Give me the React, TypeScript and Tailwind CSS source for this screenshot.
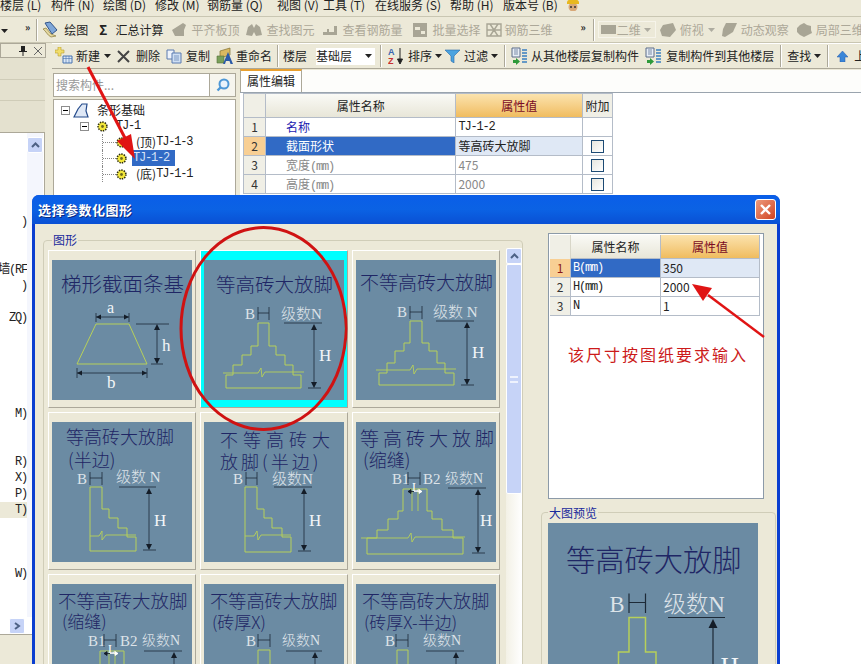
import type { ReactNode } from "react"

const cjk = "font-['Noto_Sans_CJK_SC','Noto_Sans',sans-serif]"
const mono = "font-['Liberation_Mono','Noto_Sans_CJK_SC',monospace] text-[12px] tracking-[-1.2px]"

type Shape = {
  titles: { text: string; x: number; y: number; size: number; spacing?: number }[]
  labels: { text: string; x: number; y: number; size?: number }[]
  ticks?: number[]
  tickY?: number
  lineY: number
  lineX: [number, number]
  arrowX: number
  arrowEnd: number
  hX: number
  hY: number
  outline: string
  extra?: string
  joint?: boolean
}

const F = "#b7d05a"

const shapes: Record<string, Shape> = {
  equal: {
    titles: [{ text: "等高砖大放脚", x: 12, y: 32, size: 19.5 }],
    labels: [{ text: "B", x: 41, y: 59 }, { text: "级数N", x: 77, y: 59, size: 15 }],
    ticks: [54, 65],
    tickY: 47,
    lineY: 63,
    lineX: [80, 118],
    arrowX: 110,
    arrowEnd: 128,
    hX: 115,
    hY: 101,
    outline: "M54 63H65V86H72V95H81V105H89V115H97V128H22V115H29V105H38V95H47V86H54Z",
    extra: "M19 113H54L57 108L58 117L61 112H100",
  },
  unequal: {
    titles: [{ text: "不等高砖大放脚", x: 4, y: 30, size: 19 }],
    labels: [{ text: "B", x: 41, y: 57 }, { text: "级数 N", x: 77, y: 57, size: 15 }],
    ticks: [54, 66],
    tickY: 46,
    lineY: 61,
    lineX: [80, 118],
    arrowX: 111,
    arrowEnd: 125,
    hX: 116,
    hY: 98,
    outline: "M54 61H66V83H73V91H81V103H89V113H98V125H23V113H31V103H39V91H48V83H54Z",
    extra: "M20 110H54L57 105L58 114L61 109H100",
  },
  half: {
    titles: [
      { text: "等高砖大放脚", x: 14, y: 22, size: 18 },
      { text: "(半边)", x: 16, y: 45, size: 18 },
    ],
    labels: [{ text: "B", x: 25, y: 62 }, { text: "级数 N", x: 64, y: 60, size: 15 }],
    ticks: [38, 50],
    tickY: 50,
    lineY: 65,
    lineX: [67, 104],
    arrowX: 97,
    arrowEnd: 128,
    hX: 102,
    hY: 104,
    outline: "M38 65H50V87H57V96H66V106H75V115H84V129H38Z",
    extra: "M38 114H47L50 109L50 118L54 113H84",
  },
  unequalHalf: {
    titles: [
      { text: "不等高砖大", x: 16, y: 25, size: 18, spacing: 5 },
      { text: "放脚(半边)", x: 16, y: 47, size: 18, spacing: 3 },
    ],
    labels: [{ text: "B", x: 29, y: 62 }, { text: "级数N", x: 68, y: 62, size: 15 }],
    ticks: [42, 53],
    tickY: 50,
    lineY: 65,
    lineX: [70, 108],
    arrowX: 100,
    arrowEnd: 129,
    hX: 105,
    hY: 104,
    outline: "M41 65H53V87H60V96H68V106H78V115H87V130H41Z",
    extra: "M41 114H50L53 109L54 118L57 113H87",
  },
  joint: {
    titles: [
      { text: "等高砖大放脚", x: 4, y: 24, size: 19, spacing: 4 },
      { text: "(缩缝)", x: 7, y: 45, size: 18 },
    ],
    labels: [
      { text: "B1", x: 36, y: 62 },
      { text: "B2", x: 67, y: 62 },
      { text: "级数N", x: 89, y: 61, size: 14 },
    ],
    ticks: [52, 64],
    tickY: 50,
    lineY: 66,
    lineX: [92, 130],
    arrowX: 122,
    arrowEnd: 131,
    hX: 124,
    hY: 104,
    outline: "M47 67H71V89H76V97H86V108H97V116H107V132H11V116H21V108H32V97H42V89H47Z",
    extra: "M5 116H52L55 111L56 120L59 115H109M56 67V89M62 67V89",
    joint: true,
  },
  unequalJoint: {
    titles: [
      { text: "不等高砖大放脚", x: 6, y: 24, size: 18.5 },
      { text: "(缩缝)", x: 10, y: 44, size: 17 },
    ],
    labels: [
      { text: "B1", x: 36, y: 62 },
      { text: "B2", x: 68, y: 62 },
      { text: "级数N", x: 90, y: 61, size: 14 },
    ],
    ticks: [52, 64],
    tickY: 50,
    lineY: 67,
    lineX: [92, 130],
    arrowX: 122,
    arrowEnd: 131,
    hX: 124,
    hY: 104,
    outline: "M48 67H72V89H77V97H87V108H97V116H107V132H11V116H21V108H32V97H42V89H48Z",
    extra: "M57 67V89M63 67V89",
    joint: true,
  },
  thick: {
    titles: [
      { text: "不等高砖大放脚", x: 6, y: 24, size: 18.2 },
      { text: "(砖厚X)", x: 8, y: 45, size: 17 },
    ],
    labels: [{ text: "B", x: 42, y: 62 }, { text: "级数N", x: 78, y: 61, size: 14 }],
    ticks: [54, 66],
    tickY: 50,
    lineY: 67,
    lineX: [82, 118],
    arrowX: 111,
    arrowEnd: 131,
    hX: 116,
    hY: 104,
    outline: "M54 66H66V88H73V96H81V108H89V116H98V130H23V116H31V108H39V96H48V88H54Z",
  },
  thickHalf: {
    titles: [
      { text: "不等高砖大放脚", x: 6, y: 24, size: 18.2 },
      { text: "(砖厚X-半边)", x: 8, y: 45, size: 17 },
    ],
    labels: [{ text: "B", x: 29, y: 62 }, { text: "级数N", x: 67, y: 61, size: 14 }],
    ticks: [40, 52],
    tickY: 50,
    lineY: 67,
    lineX: [70, 108],
    arrowX: 100,
    arrowEnd: 131,
    hX: 105,
    hY: 104,
    outline: "M41 66H52V88H59V96H67V108H77V116H86V130H41Z",
  },
}

function Thumb({ shape, size = 140 }: { shape: Shape; size?: number }) {
  const [t1, t2] = shape.ticks ?? [0, 0]
  const tickY = shape.tickY ?? 50
  return (
    <svg width={size} height={size} viewBox="0 0 140 140" className="block bg-[#6b8ba3] shrink-0">
      {shape.titles.map((t) => (
        <text
          key={t.text}
          x={t.x}
          y={t.y}
          fontSize={t.size}
          letterSpacing={t.spacing ?? 0}
          fill="#1f2665"
          fontFamily="'Noto Sans CJK SC', sans-serif"
          fontWeight={300}
        >
          {t.text}
        </text>
      ))}
      {shape.labels.map((l) => (
        <text
          key={l.text}
          x={l.x}
          y={l.y}
          fontSize={l.size ?? 15}
          fill="#f2f5f7"
          fillOpacity={0.85}
          fontFamily="'Liberation Serif', 'Noto Sans CJK SC', serif"
          fontWeight={300}
        >
          {l.text}
        </text>
      ))}
      <text x={shape.hX} y={shape.hY} fontSize="17" fill="#f2f5f7" fontFamily="'Liberation Serif', serif">
        H
      </text>
      <path d={`M${t1} ${tickY}V${tickY + 13}M${t2} ${tickY}V${tickY + 13}M${t1} ${tickY + 6}H${t2}`} stroke="#1d2a38" fill="none" strokeWidth="0.8" />
      <path d={`M${shape.lineX[0]} ${shape.lineY}H${shape.lineX[1]}`} stroke="#1d2a38" strokeWidth="0.8" />
      <path d={`M${shape.arrowX} ${shape.lineY + 3}V${shape.arrowEnd - 2}M${shape.arrowX - 6} ${shape.arrowEnd}H${shape.arrowX + 7}`} stroke="#1d2a38" strokeWidth="0.8" />
      <path
        d={`M${shape.arrowX} ${shape.lineY + 1}l-3 6h6ZM${shape.arrowX} ${shape.arrowEnd}l-3 -6h6Z`}
        fill="#141d28"
      />
      <path d={shape.outline} fill="none" stroke={F} strokeWidth="1" />
      {shape.extra && <path d={shape.extra} fill="none" stroke={F} strokeWidth="0.9" />}
      {shape.joint && (
        <>
          <path d="M52 69.5H58M52 69.5l3 -2v4Z" stroke="#141d28" fill="#141d28" strokeWidth="0.8" />
          <path d="M58 69.5H66M66 69.5l-3 -2v4Z" stroke="#fff" fill="#fff" strokeWidth="0.8" />
          <text x="56" y="69" fontSize="12" fill="#fff" fontFamily="'Liberation Serif', serif">L</text>
        </>
      )}
    </svg>
  )
}

function TrapezoidThumb() {
  return (
    <svg width={140} height={140} viewBox="0 0 140 140" className="block bg-[#6b8ba3] shrink-0">
      <text x="9" y="32" fontSize="20.5" fill="#1f2665" fontFamily="'Noto Sans CJK SC', sans-serif" fontWeight={300}>
        梯形截面条基
      </text>
      <text x="55" y="53" fontSize="16" fill="#f2f5f7" fontFamily="'Liberation Serif', serif">a</text>
      <text x="110" y="91" fontSize="17" fill="#f2f5f7" fontFamily="'Liberation Serif', serif">h</text>
      <text x="55" y="128" fontSize="17" fill="#f2f5f7" fontFamily="'Liberation Serif', serif">b</text>
      <path d="M44 64H77L95 104H25Z" fill="none" stroke={F} strokeWidth="1" />
      <path d="M44 53V62M77 53V62M44 57H77M84 64H117M105 66V102M99 104H111M25 108V118M95 108V118M25 113H95" stroke="#1d2a38" strokeWidth="0.8" fill="none" />
      <path d="M44 57l5 -2.5v5ZM77 57l-5 -2.5v5ZM105 64l-3 6h6ZM105 104l-3 -6h6ZM25 113l5 -2.5v5ZM95 113l-5 -2.5v5Z" fill="#141d28" />
    </svg>
  )
}

function Card({ children, selected }: { children: ReactNode; selected?: boolean }) {
  return (
    <div
      className={`w-[148px] h-[158px] flex justify-center pt-[9px] border-t border-l border-white border-r border-b border-r-[#aca899] border-b-[#aca899] ${
        selected ? "bg-[#00ffff]" : "bg-[#ece9d8]"
      }`}
    >
      {children}
    </div>
  )
}

function Caret({ className = "" }: { className?: string }) {
  return (
    <svg width="7" height="4" viewBox="0 0 7 4" className={`shrink-0 ${className}`}>
      <path d="M0 0H7L3.5 4Z" fill="#222" />
    </svg>
  )
}

function Sep({ className = "" }: { className?: string }) {
  return <div className={`w-[2px] h-[22px] shrink-0 border-l border-[#aca899] border-r-white border-r ${className}`} />
}

function Blob({ kind }: { kind: number }) {
  const d = [
    "M1 8L12 1L15 3L13 8V14H4Z",
    "M2 5L6 2L8 6L10 2L14 5L16 13L10 14L8 10L6 14L0 13Z",
    "M1 10H5V7H7V10H12V4H15V13H1Z",
    "M1 1H15V15H1ZM3 5H8V8H3ZM9 9H13V12H9Z",
    "M1 2H15V14H1ZM4 2L12 14M12 2L4 14M1 8H15",
    "M3 3L13 1L16 8L10 15L2 14L0 8Z",
    "M5 1L16 1L12 10L4 15L1 14L2 7Z",
    "M8 1L11 3L15 4L15 8L16 11L12 13L8 15L4 13L1 10L1 6L4 3Z",
  ][kind]
  return (
    <svg width="17" height="16" viewBox="0 0 17 16" className="shrink-0">
      <path d={d} fill={kind === 4 ? "none" : "#a8a595"} stroke={kind === 4 ? "#a8a595" : "none"} strokeWidth="1.4" fillRule="evenodd" />
    </svg>
  )
}

function Gear({ className = "" }: { className?: string }) {
  return (
    <svg width="11" height="11" viewBox="0 0 11 11" className={`shrink-0 ${className}`}>
      <circle cx="5.5" cy="5.5" r="4.4" fill="#f4e83a" stroke="#2c2c10" strokeWidth="1.6" strokeDasharray="1.4 1.1" />
      <circle cx="5.5" cy="5.5" r="1.4" fill="#6f6a20" />
    </svg>
  )
}

function Expander() {
  return (
    <span className="w-[9px] h-[9px] border border-[#8d8d8d] bg-white flex items-center justify-center shrink-0">
      <span className="w-[5px] h-px bg-black" />
    </span>
  )
}

function CopyFloorIcon() {
  return (
    <svg width="17" height="18" viewBox="0 0 17 18" className="shrink-0">
      <path d="M1 1H9V10H1Z" fill="#e8eef6" stroke="#5a6b88" />
      <path d="M3 3H7M3 5H7M3 7H7" stroke="#7a8ba8" />
      <path d="M2 13H5V11L9 14.5L5 18V16H2Z" fill="#2e9a3a" />
      <path d="M11 3H16M11 6H16M11 9H16M11 12H16M11 15H16" stroke="#3a7fc0" strokeWidth="1.6" />
    </svg>
  )
}

function ScrollBtn({ dir }: { dir: "up" | "right" }) {
  return (
    <div className="w-[16px] h-[16px] rounded-[2px] border border-white bg-[#c6d3f7] flex items-center justify-center shrink-0">
      <svg width="9" height="8" viewBox="0 0 9 8">
        <path d={dir === "up" ? "M1 6L4.5 2.5L8 6" : "M2 1L6 4L2 7"} fill="none" stroke="#4d6185" strokeWidth="2" />
      </svg>
    </div>
  )
}

function MenuBar() {
  const items: [string, string][] = [
    ["楼层 (L)", "w-[51px]"],
    ["构件 (N)", "w-[52px]"],
    ["绘图 (D)", "w-[52px]"],
    ["修改 (M)", "w-[52px]"],
    ["钢筋量 (Q)", "w-[70px]"],
    ["视图 (V)", "w-[46px]"],
    ["工具 (T)", "w-[52px]"],
    ["在线服务 (S)", "w-[75px]"],
    ["帮助 (H)", "w-[53px]"],
    ["版本号 (B)", "w-[62px]"],
  ]
  return (
    <div className="h-[17px] bg-[#ece9d8] border-b border-[#c9c6b2] overflow-hidden flex items-start">
      <div className="flex items-center h-[9px] pt-px">
        {items.map(([label, w]) => (
          <span key={label} className={`${w} shrink-0 text-[12px] leading-none text-[#222] whitespace-nowrap`}>
            {label}
          </span>
        ))}
        <svg width="16" height="13" viewBox="0 0 16 13" className="shrink-0 -mt-[2px]">
          <circle cx="8" cy="9" r="4.5" fill="#d8a878" />
          <path d="M2 4C3 0 13 0 14 4L14 6H2Z" fill="#e8b820" />
          <circle cx="6" cy="9" r="1" fill="#333" />
          <circle cx="10" cy="9" r="1" fill="#333" />
        </svg>
      </div>
    </div>
  )
}

function MainToolbar() {
  const gray = "text-[12px] text-[#aca899] whitespace-nowrap"
  return (
    <div className="h-[26px] bg-[#ece9d8] border-b border-[#c9c6b2] flex items-center overflow-hidden text-[#222]">
      <span className="ml-[1px] w-[6px] h-[2px]"><Caret /></span>
      <span className="ml-[18px] text-[10px] font-bold leading-none -mt-[6px]">»</span>
      <Sep className="ml-[6px]" />
      <svg width="18" height="18" viewBox="0 0 18 18" className="ml-[4px] shrink-0">
        <path d="M3 2L8 1L15 9L10 13Z" fill="#7ea6d8" stroke="#33558a" />
        <path d="M1 8C4 10 5 14 9 16L14 15L9 13L4 7Z" fill="#e3d7a0" stroke="#8a7a3a" strokeWidth="0.7" />
      </svg>
      <span className="ml-[4px] text-[12px] whitespace-nowrap">绘图</span>
      <span className="ml-[11px] text-[13px] font-bold leading-none">Σ</span>
      <span className="ml-[8px] text-[12px] whitespace-nowrap">汇总计算</span>
      <div className="ml-[8px] flex items-center"><Blob kind={0} /></div>
      <span className={`ml-[3px] ${gray}`}>平齐板顶</span>
      <div className="ml-[7px] flex items-center"><Blob kind={1} /></div>
      <span className={`ml-[3px] ${gray}`}>查找图元</span>
      <div className="ml-[8px] flex items-center"><Blob kind={2} /></div>
      <span className={`ml-[3px] ${gray}`}>查看钢筋量</span>
      <div className="ml-[10px] flex items-center"><Blob kind={3} /></div>
      <span className={`ml-[3px] ${gray}`}>批量选择</span>
      <div className="ml-[6px] flex items-center"><Blob kind={4} /></div>
      <span className={`ml-[1px] ${gray}`}>钢筋三维</span>
      <span className="ml-[28px] text-[10px] font-bold leading-none -mt-[6px]">»</span>
      <Sep className="ml-[7px]" />
      <div className="ml-[3px] w-[58px] h-[17px] border border-[#f6f4ea] flex items-center shrink-0">
        <span className="ml-[2px] w-[15px] h-[9px] bg-[#a8a595]" />
        <span className={`ml-[1px] ${gray}`}>二维</span>
        <Caret className="ml-[3px] opacity-30" />
      </div>
      <div className="ml-[4px] flex items-center"><Blob kind={5} /></div>
      <span className={`ml-[3px] ${gray}`}>俯视</span>
      <Caret className="ml-[4px] opacity-30" />
      <div className="ml-[6px] flex items-center"><Blob kind={6} /></div>
      <span className={`ml-[3px] ${gray}`}>动态观察</span>
      <div className="ml-[7px] flex items-center"><Blob kind={7} /></div>
      <span className={`ml-[3px] ${gray}`}>局部三维</span>
    </div>
  )
}

function ComponentToolbar() {
  const txt = "text-[12px] whitespace-nowrap"
  return (
    <div className="h-[24px] flex items-center text-[#222] overflow-hidden">
      <svg width="18" height="18" viewBox="0 0 18 18" className="ml-[3px] shrink-0">
        <path d="M3 0H6V3H9V6H6V9H3V6H0V3H3Z" fill="#f1dd6a" stroke="#b8a030" strokeWidth="0.6" />
        <path d="M8 9H17V16H8Z" fill="#dbe7f6" stroke="#4673b0" />
        <path d="M8 11.5H17M11 9V16M14 9V16" stroke="#4673b0" strokeWidth="0.6" />
      </svg>
      <span className={`ml-[3px] ${txt}`}>新建</span>
      <Caret className="ml-[4px]" />
      <svg width="15" height="15" viewBox="0 0 15 15" className="ml-[5px] shrink-0">
        <path d="M2 2L13 13M13 2L2 13" stroke="#444" strokeWidth="2" />
      </svg>
      <span className={`ml-[5px] ${txt}`}>删除</span>
      <svg width="16" height="15" viewBox="0 0 16 15" className="ml-[6px] shrink-0">
        <path d="M1 1H8V10H1Z" fill="#eef3fb" stroke="#5a7bb0" />
        <path d="M6 4H15V14H6Z" fill="#cfdff3" stroke="#5a7bb0" />
        <path d="M8 7H13M8 9H13M8 11H13" stroke="#5a7bb0" strokeWidth="0.7" />
      </svg>
      <span className={`ml-[4px] ${txt}`}>复制</span>
      <svg width="18" height="18" viewBox="0 0 18 18" className="ml-[6px] shrink-0">
        <path d="M4 4L14 1V8L4 11Z" fill="#d9b860" stroke="#807030" strokeWidth="0.7" />
        <path d="M1 9H8V16H1Z" fill="#7aa05a" stroke="#54703a" strokeWidth="0.6" />
        <path d="M12 5L17 17H14.5L13.5 14H10L9 17H7Z" fill="#2a5aa8" />
      </svg>
      <span className={`ml-[2px] ${txt}`}>重命名</span>
      <Sep className="ml-[5px]" />
      <span className={`ml-[4px] ${txt}`}>楼层</span>
      <div className="ml-[9px] w-[59px] h-[17px] bg-white flex items-center shrink-0">
        <span className={`${txt} flex-1`}>基础层</span>
        <Caret className="mr-[3px]" />
      </div>
      <Sep className="ml-[5px]" />
      <svg width="16" height="18" viewBox="0 0 16 18" className="ml-[6px] shrink-0">
        <text x="0" y="8" fontSize="9" fontWeight="700" fill="#3a66b0" fontFamily="'Liberation Sans', sans-serif">A</text>
        <text x="0" y="17" fontSize="9" fontWeight="700" fill="#c83030" fontFamily="'Liberation Sans', sans-serif">Z</text>
        <path d="M12 1V15M9.5 12L12 17L14.5 12Z" stroke="#222" fill="#222" />
      </svg>
      <span className={`ml-[4px] ${txt}`}>排序</span>
      <Caret className="ml-[3px]" />
      <svg width="15" height="14" viewBox="0 0 15 14" className="ml-[3px] shrink-0">
        <path d="M0 1H15L9 7V14L6 12V7Z" fill="#4aa3e0" stroke="#2a6aa8" strokeWidth="0.6" />
      </svg>
      <span className={`ml-[4px] ${txt}`}>过滤</span>
      <Caret className="ml-[3px]" />
      <Sep className="ml-[6px]" />
      <span className="ml-[5px] flex"><CopyFloorIcon /></span>
      <span className={`ml-[3px] ${txt}`}>从其他楼层复制构件</span>
      <span className="ml-[6px] flex"><CopyFloorIcon /></span>
      <span className={`ml-[4px] ${txt}`}>复制构件到其他楼层</span>
      <Sep className="ml-[6px]" />
      <span className={`ml-[5px] ${txt}`}>查找</span>
      <Caret className="ml-[3px]" />
      <Sep className="ml-[6px]" />
      <svg width="11" height="11" viewBox="0 0 11 11" className="ml-[8px] shrink-0">
        <path d="M5.5 0L11 6H8V11H3V6H0Z" fill="#3a86d8" stroke="#2a5aa8" strokeWidth="0.5" />
      </svg>
      <span className={`ml-[6px] ${txt}`}>上</span>
    </div>
  )
}

function LeftPane() {
  const rows = ["", "", "", "", "", ")", "", "", "墙(RF", ")", "", "ZQ)", "", "", "", "", "", "M)", "", "", "R)", "X)", "P)", "T)", "", "", "", "W)"]
  return (
    <div className="w-[52px] shrink-0 flex flex-col bg-[#ece9d8]">
      <div className="w-[46px] h-[15px] border border-[#aca899] bg-[#ece9d8] flex items-center justify-end gap-[7px] pr-[3px]">
        <svg width="8" height="10" viewBox="0 0 8 10"><path d="M2 0H6V5H8V6H4.5V10H3.5V6H0V5H2Z" fill="#222" /></svg>
        <svg width="8" height="8" viewBox="0 0 8 8"><path d="M0 0L8 8M8 0L0 8" stroke="#666" /></svg>
      </div>
      <div className="w-[45px] h-[22px] bg-[#e4e1cf] border-b border-[#cfccb8]" />
      <div className="w-[45px] h-[21px] bg-[#e4e1cf] border-b border-[#cfccb8]" />
      <div className="w-[45px] h-[32px] bg-[#e4e1cf] border-b border-[#aca899]" />
      <div className="w-[45px] h-[484px] bg-white border-r border-[#aca899] flex">
        <div className="w-[27px] pt-px overflow-hidden">
          {rows.map((r, i) => (
            <div
              key={i}
              className={`h-[16px] flex justify-end items-center text-[#222] whitespace-nowrap ${mono} ${r === "T)" ? "bg-[#ece9d8]" : ""}`}
            >
              {r}
            </div>
          ))}
        </div>
        <div className="w-[16px] pt-[4px] bg-[#f4f6fd]"><ScrollBtn dir="up" /></div>
      </div>
      <div className="w-[45px] h-[18px] bg-white border-r border-b border-[#aca899] flex items-center pl-[9px]">
        <ScrollBtn dir="right" />
      </div>
    </div>
  )
}

function TreeRow({ children, className = "" }: { children: ReactNode; className?: string }) {
  return <div className={`h-[16px] flex items-center ${className}`}>{children}</div>
}

function Branch() {
  return (
    <span className="w-[14px] h-[16px] shrink-0 border-l border-dotted border-[#888] flex items-center">
      <span className="w-full border-t border-dotted border-[#888]" />
    </span>
  )
}

function TreePane() {
  return (
    <div className="w-[183px] shrink-0 ml-px flex flex-col">
      <div className="mt-[4px] flex h-[24px] border border-[#aca899] bg-white">
        <span className="w-[156px] border-r border-[#aca899] pl-[2px] text-[12px] leading-[22px] text-[#999]">搜索构件...</span>
        <div className="flex-1 bg-[#f6f5ee] flex items-center justify-center">
          <svg width="14" height="14" viewBox="0 0 14 14">
            <circle cx="8" cy="6" r="4.5" fill="#e8f2fb" stroke="#4d97d6" strokeWidth="2" />
            <path d="M4.5 9.5L1.5 12.5" stroke="#4d97d6" strokeWidth="2.4" />
          </svg>
        </div>
      </div>
      <div className="mt-[2px] h-[100px] bg-white border border-[#aca899] pt-[2px] pl-[7px] text-[12px] text-[#222]">
        <TreeRow>
          <Expander />
          <svg width="16" height="15" viewBox="0 0 16 15" className="ml-[3px] shrink-0">
            <path d="M1 14L5 6L9 1H14L13 8L15 14Z" fill="#dfe8f6" stroke="#244a8a" strokeWidth="1.2" />
          </svg>
          <span className="ml-[8px]">条形基础</span>
        </TreeRow>
        <TreeRow className="pl-[19px]">
          <Expander />
          <Gear className="ml-[8px]" />
          <span className={`ml-[8px] ${mono}`}>TJ-1</span>
        </TreeRow>
        <TreeRow className="pl-[41px]">
          <Branch />
          <Gear />
          <span className="ml-[9px]">(顶)</span>
          <span className={mono}>TJ-1-3</span>
        </TreeRow>
        <TreeRow className="pl-[41px]">
          <Branch />
          <Gear />
          <span className={`ml-[5px] w-[43px] h-[16px] bg-[#316ac5] text-[#d8e4f8] pl-[1px] leading-[16px] ${mono}`}>TJ-1-2</span>
        </TreeRow>
        <TreeRow className="pl-[41px]">
          <Branch />
          <Gear />
          <span className="ml-[9px]">(底)</span>
          <span className={mono}>TJ-1-1</span>
        </TreeRow>
      </div>
    </div>
  )
}

function PropertyTable() {
  const cell = "border-r border-b border-[#b4bcc8]"
  const rows = [
    { n: "1", name: "名称", val: "TJ-1-2", nameCls: "text-[#1a1ab0]", valCls: `text-[#222] ${mono}`, check: false },
    { n: "2", name: "截面形状", val: "等高砖大放脚", sel: true, nameCls: "", valCls: "text-[#222]", check: true },
    { n: "3", name: "宽度", unit: "(mm)", val: "475", nameCls: "text-[#888]", valCls: "text-[#888]", check: true },
    { n: "4", name: "高度", unit: "(mm)", val: "2000", nameCls: "text-[#888]", valCls: "text-[#888]", check: true },
  ]
  return (
    <div className="flex-1 flex flex-col ml-[4px] pt-[1px]">
      <div className="h-[23px] flex items-end border-b border-[#9aa4ae] bg-[#fdfdfb]">
        <div className="w-[62px] h-[23px] border-x border-[#aca899] border-t-2 border-t-[#e8a030] text-[12px] leading-[20px] pl-[6px] text-[#222] bg-white">属性编辑</div>
      </div>
      <div className="flex-1 bg-white pl-[3px]">
        <div className="w-[370px] border-l border-t border-[#b4bcc8] text-[12px]">
          <div className="flex h-[24px]">
            <div className={`w-[22px] bg-[#f0efe6] ${cell}`} />
            <div className={`w-[191px] bg-gradient-to-b from-[#fafaf6] to-[#e8e6d8] text-center leading-[23px] text-[#222] ${cell}`}>属性名称</div>
            <div className={`w-[127px] bg-gradient-to-b from-[#fbe3ad] to-[#f0bc5e] text-center leading-[23px] text-[#7a0a24] ${cell}`}>属性值</div>
            <div className={`w-[30px] bg-[#f0efe6] text-center leading-[23px] text-[#222] ${cell}`}>附加</div>
          </div>
          {rows.map((r) => (
            <div key={r.n} className="flex h-[19px]">
              <div className={`w-[22px] text-center leading-[18px] text-[#333] ${r.sel ? "bg-[#f8cf94] text-[#8a1818]" : "bg-[#f0efe6]"} ${cell}`}>{r.n}</div>
              <div className={`w-[191px] pl-[20px] leading-[18px] ${r.sel ? "bg-[#316ac5] text-white" : r.nameCls} ${cell}`}>
                {r.name}
                {r.unit && <span className={mono}>{r.unit}</span>}
              </div>
              <div className={`w-[127px] pl-[2px] leading-[18px] ${r.sel ? "bg-[#dfe8f5]" : ""} ${r.valCls} ${cell}`}>{r.val}</div>
              <div className={`w-[30px] flex items-center justify-center ${cell}`}>
                {r.check && <span className="w-[13px] h-[13px] border border-[#1c4a74] bg-gradient-to-br from-[#e6e6df] to-white" />}
              </div>
            </div>
          ))}
        </div>
      </div>
    </div>
  )
}

function ParamGrid() {
  const cell = "border-r border-b border-[#b4bcc8]"
  const rows = [
    { n: "1", name: "B(mm)", val: "350", sel: true },
    { n: "2", name: "H(mm)", val: "2000" },
    { n: "3", name: "N", val: "1" },
  ]
  return (
    <div className="ml-[7px] mt-[9px] w-[216px] h-[266px] shrink-0 bg-white border border-[#8c9aa8] p-px text-[12px]">
      <div className="flex h-[24px]">
        <div className="w-[21px] bg-[#f0efe6] border-r border-[#d8d6c8]" />
        <div className={`w-[90px] bg-gradient-to-b from-[#fafaf6] to-[#e8e6d8] text-center leading-[23px] text-[#222] ${cell}`}>属性名称</div>
        <div className={`w-[99px] bg-gradient-to-b from-[#fbe3ad] to-[#f0bc5e] text-center leading-[23px] text-[#7a0a24] ${cell}`}>属性值</div>
      </div>
      {rows.map((r) => (
        <div key={r.n} className="flex h-[19px]">
          <div className={`w-[21px] text-center leading-[18px] ${r.sel ? "bg-[#f8cf94] text-[#8a1818]" : "bg-[#f0efe6] text-[#333]"} ${cell}`}>{r.n}</div>
          <div className={`w-[90px] pl-[2px] leading-[18px] ${mono} ${r.sel ? "bg-[#316ac5] text-white" : "text-[#222]"} ${cell}`}>{r.name}</div>
          <div className={`w-[99px] pl-[2px] leading-[18px] text-[#222] ${r.sel ? "bg-[#dfe8f5]" : ""} ${cell}`}>{r.val}</div>
        </div>
      ))}
      <div className="mt-[28px] ml-[18px] text-[16px] leading-[20px] tracking-[2px] text-[#cc1a1a] whitespace-nowrap">该尺寸按图纸要求输入</div>
    </div>
  )
}

function ParamDialog() {
  return (
    <div className="absolute left-[32px] top-[195px] w-[748px] h-[520px] rounded-t-[7px] bg-[#0a3ed0] overflow-hidden">
      <div className="h-[29px] bg-gradient-to-b from-[#0a5ee8] via-[#0b62e4] to-[#0a50d4] flex items-center justify-between pl-[6px] pr-[4px]">
        <span className="text-[13px] font-bold text-white [text-shadow:1px_1px_0_#0a2a80] tracking-[0.5px]">选择参数化图形</span>
        <div className="w-[21px] h-[21px] rounded-[3px] border border-white bg-gradient-to-br from-[#ec9a7c] to-[#d0401c] flex items-center justify-center">
          <svg width="13" height="13" viewBox="0 0 13 13"><path d="M2 2L11 11M11 2L2 11" stroke="white" strokeWidth="2.4" /></svg>
        </div>
      </div>
      <div className="flex h-[491px] mx-[3px] bg-[#ece9d8]">
        <div className="ml-[8px] mt-[16px] w-[480px] h-[600px] relative border border-[#d0cdb8] rounded-[4px] flex items-start pl-[4px]">
          <span className="absolute -top-[9px] left-[8px] px-px bg-[#ece9d8] text-[12px] leading-[16px] text-[#1a2a9c]">图形</span>
          <div className="mt-[9px] grid grid-cols-[repeat(3,148px)] gap-x-[4px] gap-y-[4px]">
            <Card><TrapezoidThumb /></Card>
            <Card selected><Thumb shape={shapes.equal} /></Card>
            <Card><Thumb shape={shapes.unequal} /></Card>
            <Card><Thumb shape={shapes.half} /></Card>
            <Card><Thumb shape={shapes.unequalHalf} /></Card>
            <Card><Thumb shape={shapes.joint} /></Card>
            <Card><Thumb shape={shapes.unequalJoint} /></Card>
            <Card><Thumb shape={shapes.thick} /></Card>
            <Card><Thumb shape={shapes.thickHalf} /></Card>
          </div>
          <div className="ml-[6px] mt-[7px] w-[16px] h-[500px] bg-gradient-to-r from-[#f3f1e6] to-white flex flex-col">
            <ScrollBtn dir="up" />
            <div className="h-[230px] rounded-[2px] border border-white bg-[#c6d3f7] flex items-center justify-center">
              <span className="w-[8px] h-[7px] border-y-2 border-[#eef2fd]" />
            </div>
          </div>
        </div>
        <div className="ml-[18px] w-[235px] flex flex-col">
          <ParamGrid />
          <div className="mt-[13px] h-[300px] shrink-0 relative border border-[#d0cdb8] rounded-[4px] pl-[6px] pt-[10px]">
            <span className="absolute -top-[8px] left-[6px] px-px bg-[#ece9d8] text-[12px] leading-[16px] text-[#1a2a9c]">大图预览</span>
            <Thumb shape={shapes.equal} size={210} />
          </div>
        </div>
      </div>
    </div>
  )
}

function Annotations() {
  return (
    <svg width="861" height="664" viewBox="0 0 861 664" className="absolute inset-0 pointer-events-none">
      <ellipse cx="263.5" cy="328.5" rx="82.5" ry="101" fill="none" stroke="#cf1212" strokeWidth="3" />
      <path d="M88 67L125 138" stroke="#e01414" strokeWidth="3" />
      <path d="M135 159L117 141L131 134Z" fill="#e01414" />
      <path d="M764 337L708 295" stroke="#e01414" strokeWidth="2.5" />
      <path d="M692 284L712 288L703 301Z" fill="#e01414" />
    </svg>
  )
}

export default function App() {
  return (
    <div className={`relative w-[861px] h-[664px] overflow-hidden bg-white ${cjk}`}>
      <MenuBar />
      <MainToolbar />
      <div className="flex h-[621px]">
        <LeftPane />
        <div className="flex-1 flex flex-col min-w-0 bg-[#ece9d8]">
          <div className="bg-[#ece9d8] border-b border-[#aca899] border-t border-t-white">
            <ComponentToolbar />
          </div>
          <div className="flex flex-1 min-h-0">
            <TreePane />
            <PropertyTable />
          </div>
        </div>
      </div>
      <ParamDialog />
      <Annotations />
    </div>
  )
}
